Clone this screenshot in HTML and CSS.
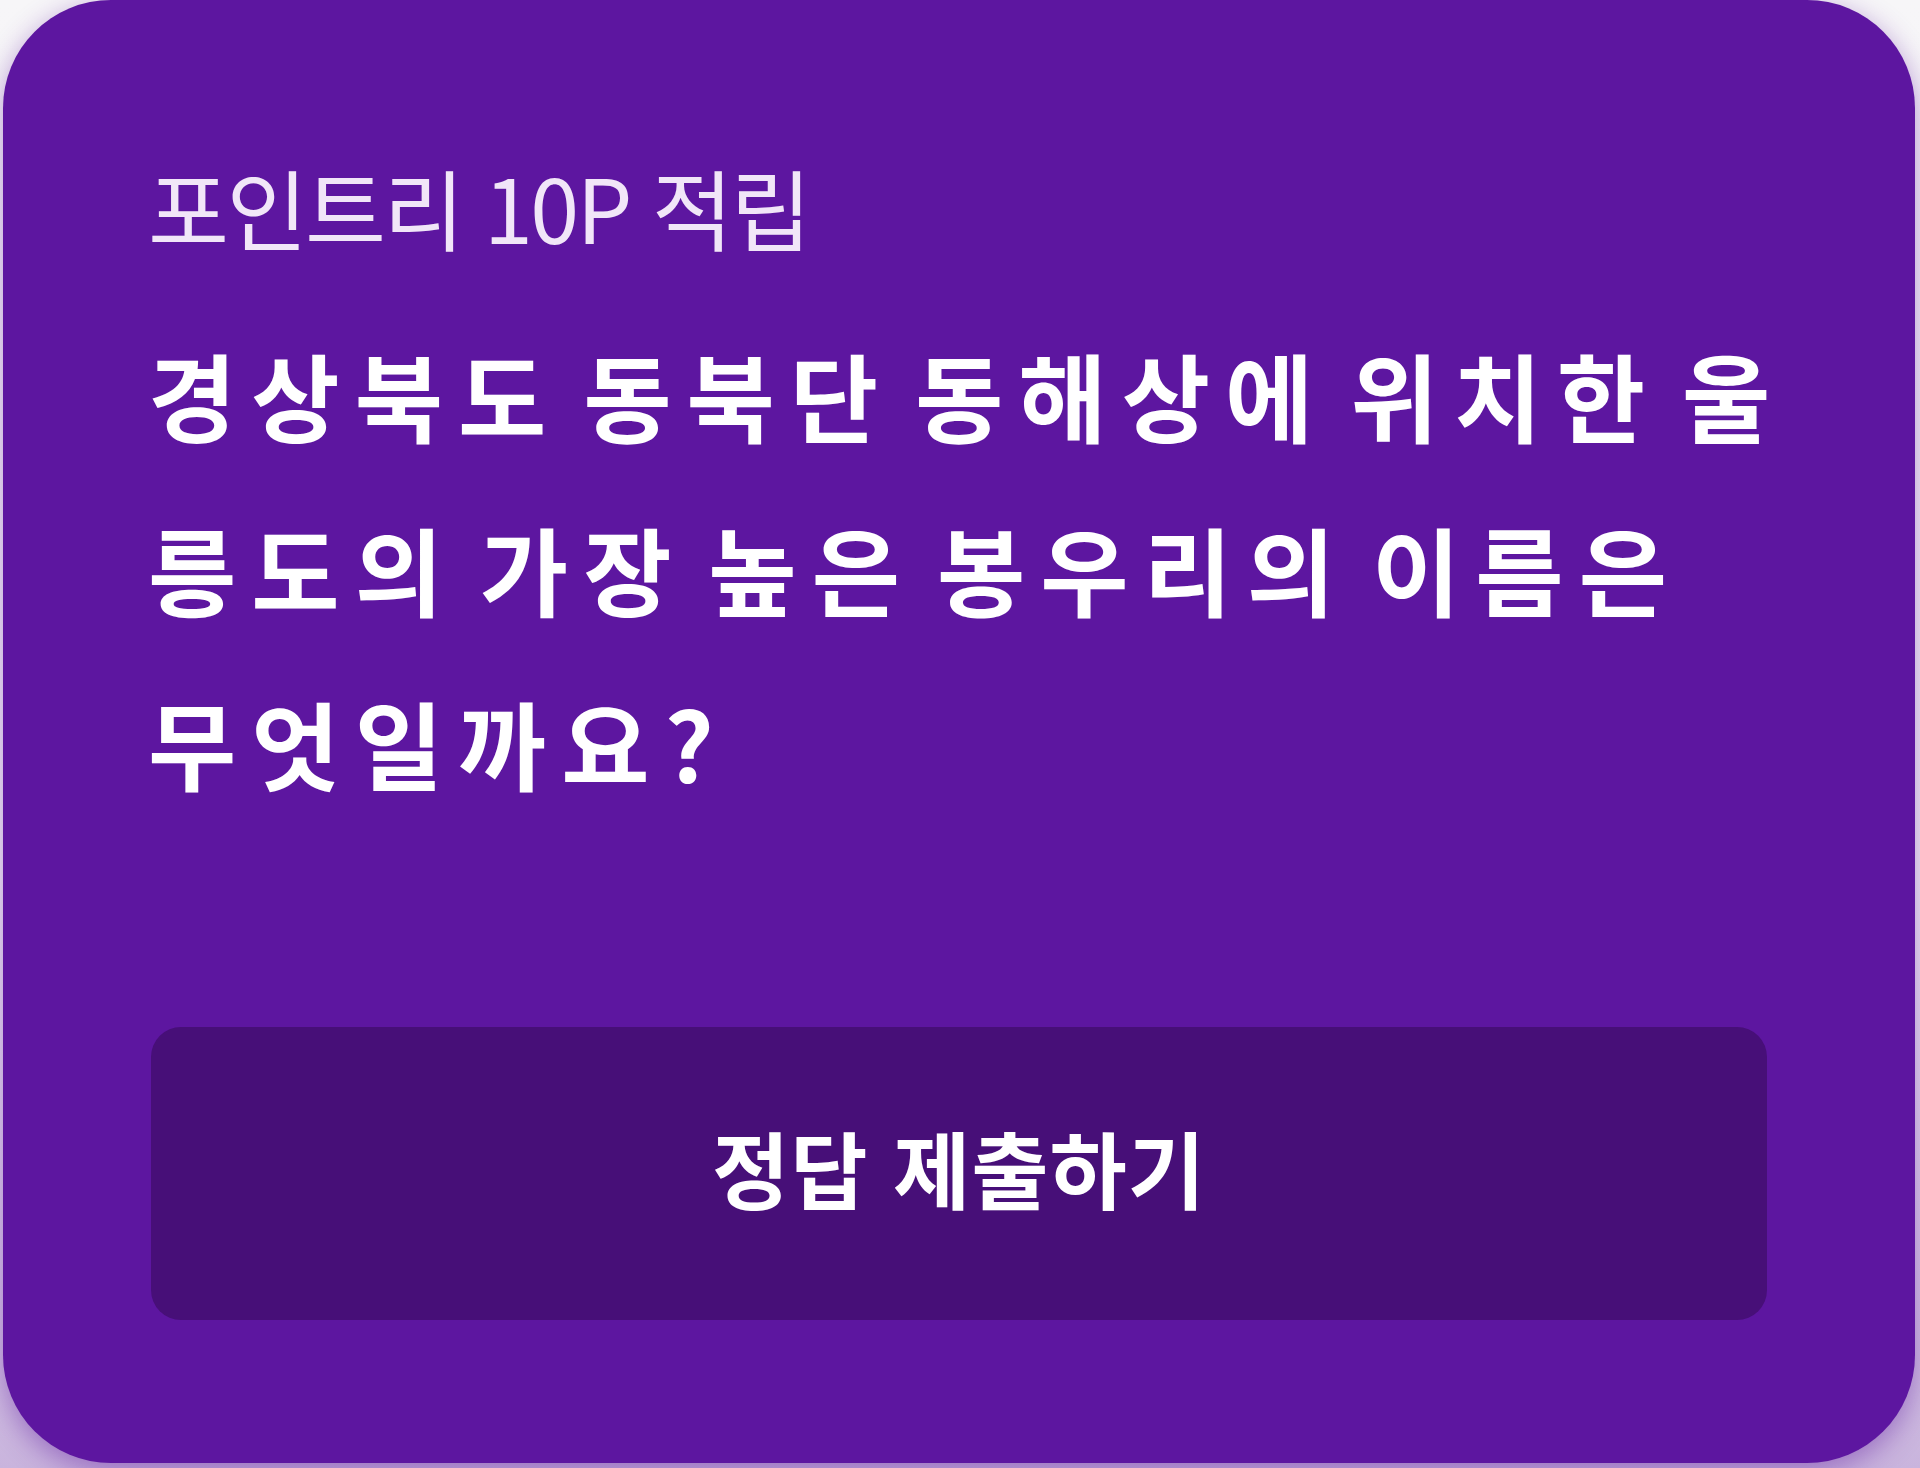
FILE: index.html
```html
<!DOCTYPE html>
<html lang="ko">
<head>
<meta charset="utf-8">
<title>포인트리 퀴즈</title>
<link rel="stylesheet" href="styles.css">
</head>
<body>
<div class="page">
  <section class="card">
    <p class="label">포인트리 10P 적립</p>
    <h1 class="question">경상북도 동북단 동해상에 위치한 울릉도의 가장 높은 봉우리의 이름은 무엇일까요?</h1>
    <button class="submit" type="button">정답 제출하기</button>
  </section>
</div>
</body>
</html>
```

FILE: styles.css
```css
html, body {
  margin: 0;
  padding: 0;
}
body {
  width: 1920px;
  height: 1468px;
  overflow: hidden;
  background: linear-gradient(to bottom, #f7f6f8 0%, #f3f0f6 60%, #c9b4dd 100%);
  font-family: "Noto Sans CJK KR", "Noto Sans", sans-serif;
}
.page {
  padding: 0 5px 5px 3px;
  box-sizing: border-box;
  height: 1468px;
}
.card {
  box-sizing: border-box;
  height: 1463px;
  background: #5d16a0;
  border-radius: 108px;
  padding: 149px 148px 143px 148px;
  display: flex;
  flex-direction: column;
  box-shadow: 0 8px 28px rgba(94, 22, 160, 0.45);
}
.label {
  margin: 0 0 0 -3px;
  font-size: 88px;
  line-height: 1.3;
  font-weight: 400;
  color: #f1e6f8;
  letter-spacing: -2.5px;
}
.question {
  margin: 44px -28px 0 -3px;
  font-size: 96px;
  line-height: 174px;
  font-weight: 700;
  color: #ffffff;
  letter-spacing: 15px;
  word-spacing: -20px;
}
.submit {
  margin-top: auto;
  height: 293px;
  padding: 0 0 14px 0;
  border: none;
  border-radius: 30px;
  background: #470f78;
  color: #ffffff;
  font-family: "Noto Sans CJK KR", "Noto Sans", sans-serif;
  font-size: 84px;
  font-weight: 700;
  letter-spacing: 1px;
  cursor: pointer;
}
```
